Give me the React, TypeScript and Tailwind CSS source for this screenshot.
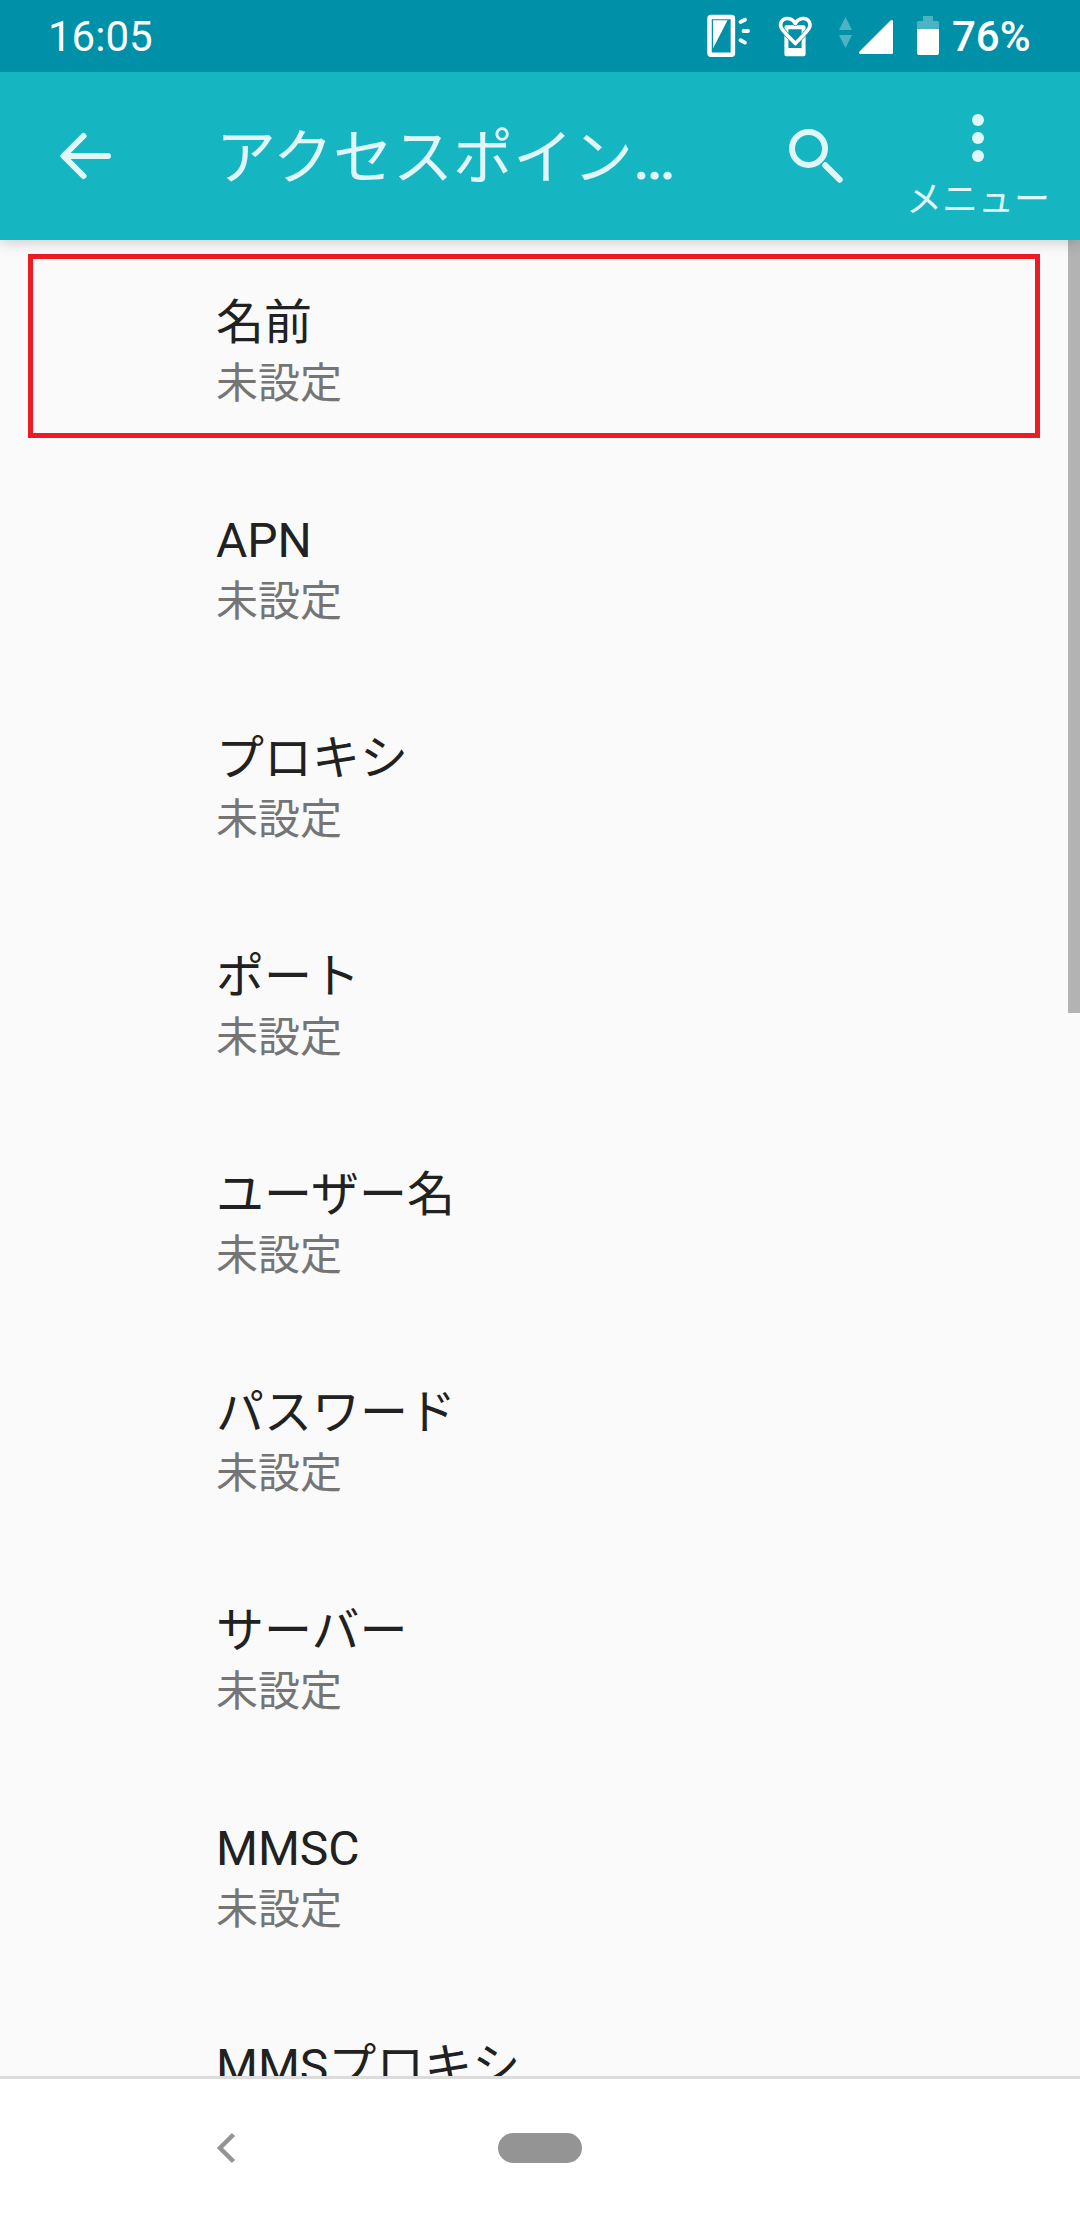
import React from 'react';

const settings = [
  { title: '名前', value: '未設定' },
  { title: 'APN', value: '未設定' },
  { title: 'プロキシ', value: '未設定' },
  { title: 'ポート', value: '未設定' },
  { title: 'ユーザー名', value: '未設定' },
  { title: 'パスワード', value: '未設定' },
  { title: 'サーバー', value: '未設定' },
  { title: 'MMSC', value: '未設定' },
  { title: 'MMSプロキシ' },
];

const StatusBar = () => {
  return (
    <div className="relative z-20 flex h-[72px] items-center bg-[#0091a8] pl-12 text-[42px] leading-[70px] text-white">
      <span className="pt-0.5">16:05</span>
      <div className="ml-auto flex w-[376px] items-center">
        {/* phone with signal rays */}
        <svg width="48" height="72" viewBox="704 0 48 72" fill="none" stroke="#fff">
          <rect x="709.5" y="17" width="23.4" height="37.8" rx="1.5" strokeWidth="4.5" />
          <path d="M713 20.2H727.5L713 48.5Z" fill="#fff" stroke="none" />
          <path d="M740.5 22 745 19.7M743.5 31H748M740.5 40.2 745 42.6" strokeWidth="3.8" strokeLinecap="round" />
        </svg>
        {/* heart over cup */}
        <svg className="ml-6" width="40" height="72" viewBox="776 0 40 72" fill="none" stroke="#fff" strokeLinejoin="round">
          <path d="M786.4 54.2V27.3H803.6V54.2Z" strokeWidth="4" />
          <path d="M787 48H803V55H787Z" fill="#fff" stroke="none" />
          <path d="M795.3 23.5C793 19.5 789.5 18.3 786.5 18.5C781.5 19 779.3 24 781.4 28C782.8 31 786 34 795.3 43.6C804.6 34 807.8 31 809.2 28C811.3 24 809.1 19 804.1 18.5C801.1 18.3 797.6 19.5 795.3 23.5Z" stroke="#0091a8" strokeWidth="4.8" />
          <path d="M795.3 23.5C793 19.5 789.5 18.3 786.5 18.5C781.5 19 779.3 24 781.4 28C782.8 31 786 34 795.3 43.6C804.6 34 807.8 31 809.2 28C811.3 24 809.1 19 804.1 18.5C801.1 18.3 797.6 19.5 795.3 23.5Z" strokeWidth="3.6" />
        </svg>
        <svg className="ml-[22px]" width="16" height="72" viewBox="838 0 16 72" fill="#4db3c3">
          <path d="M845.5 17 852 30H839ZM839 35H852L845.5 48Z" />
        </svg>
        <svg className="ml-1" width="36" height="72" viewBox="858 0 36 72" fill="#fff">
          <path d="M893 21.5V52.5Q893 54 891.5 54H860Q858 53 859.5 51.5L890.5 20.5Q893 19 893 21.5Z" />
        </svg>
        <svg className="ml-[22px]" width="24" height="72" viewBox="916 0 24 72">
          <path d="M917 29V22.5Q917 21 918.5 21H923V16H933V21H937.5Q939 21 939 22.5V29Z" fill="#4db3c3" />
          <path d="M917 29H939V53Q939 55 937 55H919Q917 55 917 53Z" fill="#fff" />
        </svg>
        <span className="ml-3 pt-0.5 font-medium">76%</span>
      </div>
    </div>
  );
};

const AppBar = () => {
  return (
    <div className="relative z-10 flex h-[168px] items-center bg-[#15b6c1] text-[#e0f6f8] shadow-[0_2px_14px_rgba(0,0,0,0.2)]">
      <svg className="ml-[54px]" width="60" height="60" viewBox="54 126 60 60" fill="none" stroke="currentColor" strokeWidth="6" strokeLinecap="round" strokeLinejoin="round">
        <path d="M83.5 136 63.5 156 83.5 176M64 156H108" />
      </svg>
      <h1 className="ml-[102px] w-[570px] pt-[6px] text-[60px] leading-[84px]">
        アクセスポイン<span className="font-medium">…</span>
      </h1>
      <svg width="60" height="60" viewBox="786 126 60 60" fill="none" stroke="currentColor" strokeWidth="6" strokeLinecap="round">
        <circle cx="808.5" cy="148.5" r="16.5" />
        <path d="M825.3 165.3 839.7 179.7" />
      </svg>
      <div className="ml-[30px] flex h-[168px] w-[204px] flex-col items-center pt-[42px]">
        <svg width="12" height="48" viewBox="0 0 12 48" fill="currentColor">
          <circle cx="6" cy="6" r="6" />
          <circle cx="6" cy="24" r="6" />
          <circle cx="6" cy="42" r="6" />
        </svg>
        <span className="mt-[14px] text-[36px] leading-[48px]">メニュー</span>
      </div>
    </div>
  );
};

const SettingsList = () => {
  return (
    <div className="relative h-[1836px] overflow-hidden bg-[#fafafa]">
      <ul>
        {settings.map((item) => (
          <li key={item.title} className="h-[218px] pt-[51px] pl-[216px]">
            <p className="text-[48px] leading-[64px] text-[#212121]">{item.title}</p>
            {item.value && <p className="text-[42px] leading-[58px] text-[#757575]">{item.value}</p>}
          </li>
        ))}
      </ul>
      {/* highlight around the first row */}
      <div className="absolute top-[14px] left-[28px] h-[184px] w-[1012px] border-5 border-[#ed1c24]" />
      {/* scrollbar thumb */}
      <div className="absolute top-0 right-0 h-[773px] w-3 bg-[#b3b3b3]" />
    </div>
  );
};

const NavigationBar = () => {
  return (
    <div className="flex h-[144px] items-center border-t-3 border-[#dcdcdc] bg-white pb-[3px]">
      <svg className="ml-[214px]" width="24" height="36" viewBox="214 2130 24 36" fill="none" stroke="#949494" strokeWidth="4.5">
        <path d="M233.5 2134.5 220 2148 233.5 2161.5" />
      </svg>
      <div className="ml-[260px] h-[30px] w-[84px] rounded-[15px] bg-[#949494]" />
    </div>
  );
};

export default function App() {
  return (
    <div className="h-[2220px] w-[1080px] overflow-hidden bg-[#fafafa] font-[Roboto,'Noto_Sans_CJK_JP',sans-serif]" lang="ja">
      <StatusBar />
      <AppBar />
      <SettingsList />
      <NavigationBar />
    </div>
  );
}
